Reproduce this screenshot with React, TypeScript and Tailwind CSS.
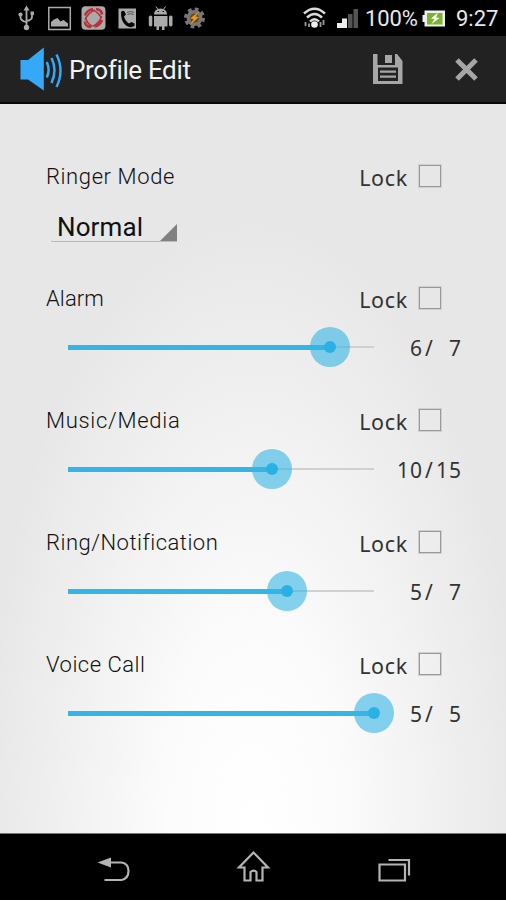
import type { ReactNode } from 'react'

type Volume = {
  name: string
  value: number
  max: number
  nameClass: string
}

const volumes: Volume[] = [
  { name: 'Alarm', value: 6, max: 7, nameClass: 'tracking-[0.1px]' },
  { name: 'Music/Media', value: 10, max: 15, nameClass: 'tracking-[0.7px]' },
  { name: 'Ring/Notification', value: 5, max: 7, nameClass: 'tracking-[0.5px]' },
  { name: 'Voice Call', value: 5, max: 5, nameClass: 'tracking-[0.5px]' },
]

function StatusBar() {
  return (
    <div className="flex h-9 shrink-0 justify-between bg-black">
      <svg width="220" height="36" viewBox="0 0 220 36" fill="none">
        {/* usb */}
        <g stroke="#aaa" strokeWidth="1.8">
          <path d="M26.5 9v18M20.5 14v3.5q0 3 5.500 4.500M32 13v4q0 3-5.500 4" />
        </g>
        <path d="M23.500 10.500 26.500 5.500l3 5z" fill="#aaa" />
        <circle cx="26.500" cy="27.500" r="2.700" fill="#aaa" />
        <circle cx="20.500" cy="14.500" r="2.100" fill="#aaa" />
        <path d="M30.500 11.500h3.500v3.500h-3.500z" fill="#aaa" />
        {/* picture */}
        <path d="M48.800 7.500h21.500v22h-21.500z" stroke="#aaa" strokeWidth="1.500" />
        <path d="M51 26.500v-4.500l3-2.500 3.500-1.500 3 3.500 3-1.500 4.500 3.500v3z" fill="#aaa" />
        {/* sync app */}
        <rect x="81.500" y="6.300" width="24" height="23.500" rx="4" fill="#aaa" />
        <g stroke="#bd2f37">
          <path d="M85 15.500q2-5.500 8-6.500M96 9q5.500.5 6 5.500M102 20q-2 5.500-7.500 6.500M91 27q-6-.5-6-5.500" strokeWidth="2.600" />
          <path d="M85 20q3-7.500 10-10M93 26q7-3 8.500-10M91 9.500q7 1.500 10.500 9M85.500 17q1.500 7 7 9.500" strokeWidth="1.500" />
        </g>
        {/* call log */}
        <path d="M118.500 8.500h17.500v20h-17.500z" fill="#aaa" />
        <path d="M121 12q2-2 3.500-.5l1.500 3-2 2q1.500 5 5 7l2.500-1.500 3 1.500v2.500q-4 2.500-8.500-.5-5.500-4.500-5-13.500z" fill="#050505" />
        <path d="M127 12.500q4-2 7 0M127.500 14.500q3-1.500 6 0" stroke="#555" />
        {/* android */}
        <g fill="#aaa">
          <path d="M154 14.500q0-5.500 6.500-6 6.500.5 6.500 6zM154 16h13.500v10.500h-3V30h-2.500v-3.500h-3V30h-2.500v-3.500H154z" />
          <rect x="148.800" y="15.500" width="3.500" height="11" rx="1.700" />
          <rect x="169" y="15.500" width="3.500" height="11" rx="1.700" />
        </g>
        <path d="m156 6.500 2 3M165.500 6.500l-2 3" stroke="#aaa" />
        <path d="M157.500 11.500h1.500M162.500 11.500h1.500" stroke="#111" />
        {/* gear */}
        <circle cx="194.500" cy="18" r="8.900" stroke="#777" strokeWidth="3.200" strokeDasharray="3.790 3.200" />
        <circle cx="194.500" cy="18" r="8" fill="#777" />
        <circle cx="194.500" cy="18" r="4.500" fill="#68451d" />
        <path d="m199.500 11-9.500 7.500 3.500.5-3.500 6 9-8-3.500-.5z" fill="#e59a22" />
      </svg>
      <div className="flex h-9 items-center text-[22px] text-[#e8e8e8]">
        <svg width="63" height="36" viewBox="301.500 0 63 36" fill="none">
          <g stroke="#ddd" strokeWidth="2.400">
            <path d="M303.500 13.500q10.500-9.500 21 0M306.500 17.500q7.500-7 15 0M309.500 21.500q4.500-4.500 9 0" />
          </g>
          <circle cx="314" cy="24.500" r="3.300" fill="#eee" />
          <path d="M305 22v4M308.500 23.500v3.500M323 20v5M320 22v5" stroke="#999" strokeWidth="1.800" />
          <path d="M336.500 23h5v5h-5zM341.500 18.500h5V28h-5z" fill="#eee" />
          <path d="M347.500 14h4.500v14h-4.500zM353 9h4.500v19H353z" fill="#555" />
        </svg>
        <span className="w-[57px] whitespace-nowrap tracking-[-0.1px]">100%</span>
        <svg width="34" height="36" viewBox="422 0 34 36">
          <path d="M422.500 15h2v-4.500h20.500v16h-20.500V22h-2z" fill="#eee" />
          <path d="M427 13h15.500v11.500H427z" fill="#78b52c" />
          <path d="m438 12.500-7 6 3.500.5-3 5 8-6-3.500-.5z" fill="#fff" />
        </svg>
        <span className="w-[50px] whitespace-nowrap">9:27</span>
      </div>
    </div>
  )
}

function ActionBar() {
  return (
    <div className="flex h-[68px] shrink-0 items-center border-b-2 border-[#080808] bg-[#222]">
      <svg className="ml-5 shrink-0" width="44" height="46" viewBox="20 46 44 46" fill="none">
        <path d="M20.500 60h7.500l15.800-12.500v43L28 79.500h-7.500z" fill="#36a8f8" />
        <g stroke="#36a8f8" strokeWidth="2.500">
          <path d="M46.800 62q3.600 8 0 15.500M51.500 58q6 12 0 25M56.500 54.500q8 16 0 32.500" />
        </g>
      </svg>
      <h1 className="ml-[5px] pt-[3px] text-[26px] tracking-[-0.35px] text-[#f3f3f3]">Profile Edit</h1>
      <button className="ml-auto" aria-label="Save">
        <svg width="32" height="32" viewBox="0 0 32 32">
          <path d="M1 1h4.500v11h17.500V1h2L30.500 8v23H1zm5 13.500v13.500h20V14.500z" fill="#a6a6a6" fillRule="evenodd" />
          <path d="M13 2h7v8h-7zM8 17.500h16v2.300H8zM8 22.500h16v2.300H8z" fill="#a6a6a6" />
        </svg>
      </button>
      <button className="ml-[50px] mr-[27px] pt-px" aria-label="Close">
        <svg width="25" height="25" viewBox="0 0 25 25">
          <path d="m3 3 19 19M22 3 3 22" stroke="#a6a6a6" strokeWidth="5" />
        </svg>
      </button>
    </div>
  )
}

function SettingHeader({ children }: { children: ReactNode }) {
  return (
    <div className="flex h-[30px] items-center pl-[46px] pr-16">
      {children}
      <label className="ml-auto flex items-center">
        <span className="pt-[3px] font-['Noto_Sans',sans-serif] text-[21.5px] leading-[30px] tracking-[0.7px] text-[#333]">
          Lock
        </span>
        <span className="ml-2.5 flex size-6 p-px">
          <span className="size-full border border-[#999] outline outline-[#d0d0d0]" />
        </span>
      </label>
    </div>
  )
}

function VolumeSetting({ name, value, max, nameClass }: Volume) {
  const percent = `${(value / max) * 100}%`

  return (
    <section className="h-[122px]">
      <SettingHeader>
        <h2 className={`pt-px text-[22px] font-light text-[#111] ${nameClass}`}>{name}</h2>
      </SettingHeader>
      <div className="mt-[14px] flex h-10 items-center justify-between pl-[68px] pr-11">
        <div className="relative flex h-10 w-[306px] items-center">
          <div className="h-0.5 w-full bg-[#d0d0d0]" />
          <div className="absolute left-0 h-[5px] bg-[#33b5e5]" style={{ width: percent }} />
          <div
            className="absolute flex size-10 -translate-x-1/2 items-center justify-center rounded-full bg-[#33b5e5]/60"
            style={{ left: percent }}
          >
            <div className="size-3 rounded-full bg-[#2bb0e6]" />
          </div>
        </div>
        <div className="flex whitespace-pre pt-0.5 font-['Noto_Sans',sans-serif] text-[21px] leading-[30px] tracking-[1px] text-[#333]">
          <span>{value}</span>
          <span className="w-[13px] text-center">/</span>
          <span className="w-[26px] text-right">{max}</span>
        </div>
      </div>
    </section>
  )
}

function NavigationBar() {
  return (
    <div className="h-[67px] shrink-0 border-t border-[#777] bg-black">
      <svg width="506" height="66" viewBox="0 834 506 66" fill="none" stroke="#b4b4b4" strokeWidth="2.200">
        <path d="M109 862.500h12.500q7 1 7 8.500t-7 9H104.500" />
        <path d="m97.500 862.500 13.500-5v10z" fill="#b4b4b4" stroke="none" />
        <path d="m253.500 852.500-14.500 15h5.500v13h6v-8.500q3-3 6 0v8.500h6v-13h5.500z" />
        <path d="M379.500 864.500h25.500v16h-25.500zM388.500 860h20.500v15.500" />
      </svg>
    </div>
  )
}

function App() {
  return (
    <div className="flex h-[900px] w-[506px] flex-col overflow-hidden font-[Roboto,sans-serif]">
      <StatusBar />
      <ActionBar />
      <main className="h-[729px] bg-[radial-gradient(ellipse_54%_85%_at_50%_100%,#fff,#fcfcfc_30%,#f3f3f3_60%,#e7e7e7)] pt-[57px]">
        <section className="h-[122px]">
          <SettingHeader>
            <h2 className="pt-px text-[22px] font-light tracking-[0.6px] text-[#111]">Ringer Mode</h2>
          </SettingHeader>
          <button className="ml-[51px] mt-[17px] flex h-[34px] w-[126px] items-end justify-between border-b border-[#bbb] pl-1.5 text-[26px] leading-7 tracking-[0.1px] text-[#111]">
            Normal
            <svg width="17" height="17" viewBox="0 0 17 17">
              <path d="M17 0v17H0z" fill="#808080" />
            </svg>
          </button>
        </section>
        {volumes.map((volume) => (
          <VolumeSetting key={volume.name} {...volume} />
        ))}
      </main>
      <NavigationBar />
    </div>
  )
}

export default App
